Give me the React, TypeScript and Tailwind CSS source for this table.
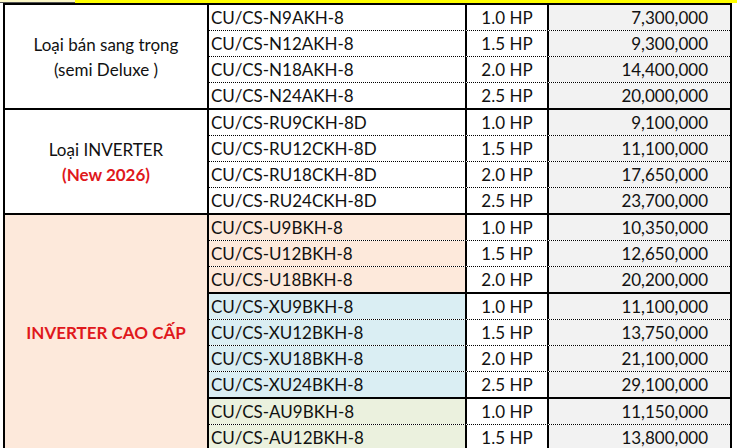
import React from "react";

type Row = { model: string; hp: string; price: string };

const groups: {
  label: React.ReactNode;
  bg: string;
  subs: { bg: string; rows: Row[] }[];
}[] = [
  {
    label: (
      <>
        <div>Loại bán sang trọng</div>
        <div>(semi Deluxe )</div>
      </>
    ),
    bg: "bg-white",
    subs: [
      {
        bg: "bg-white",
        rows: [
          { model: "CU/CS-N9AKH-8", hp: "1.0 HP", price: "7,300,000" },
          { model: "CU/CS-N12AKH-8", hp: "1.5 HP", price: "9,300,000" },
          { model: "CU/CS-N18AKH-8", hp: "2.0 HP", price: "14,400,000" },
          { model: "CU/CS-N24AKH-8", hp: "2.5 HP", price: "20,000,000" },
        ],
      },
    ],
  },
  {
    label: (
      <>
        <div>Loại INVERTER</div>
        <div className="font-bold text-[#e0181c]">(New 2026)</div>
      </>
    ),
    bg: "bg-white",
    subs: [
      {
        bg: "bg-white",
        rows: [
          { model: "CU/CS-RU9CKH-8D", hp: "1.0 HP", price: "9,100,000" },
          { model: "CU/CS-RU12CKH-8D", hp: "1.5 HP", price: "11,100,000" },
          { model: "CU/CS-RU18CKH-8D", hp: "2.0 HP", price: "17,650,000" },
          { model: "CU/CS-RU24CKH-8D", hp: "2.5 HP", price: "23,700,000" },
        ],
      },
    ],
  },
  {
    label: <div className="font-bold text-[#e0181c]">INVERTER CAO CẤP</div>,
    bg: "bg-[#fde9db]",
    subs: [
      {
        bg: "bg-[#fde9db]",
        rows: [
          { model: "CU/CS-U9BKH-8", hp: "1.0 HP", price: "10,350,000" },
          { model: "CU/CS-U12BKH-8", hp: "1.5 HP", price: "12,650,000" },
          { model: "CU/CS-U18BKH-8", hp: "2.0 HP", price: "20,200,000" },
        ],
      },
      {
        bg: "bg-[#daeef3]",
        rows: [
          { model: "CU/CS-XU9BKH-8", hp: "1.0 HP", price: "11,100,000" },
          { model: "CU/CS-XU12BKH-8", hp: "1.5 HP", price: "13,750,000" },
          { model: "CU/CS-XU18BKH-8", hp: "2.0 HP", price: "21,100,000" },
          { model: "CU/CS-XU24BKH-8", hp: "2.5 HP", price: "29,100,000" },
        ],
      },
      {
        bg: "bg-[#ebf1de]",
        rows: [
          { model: "CU/CS-AU9BKH-8", hp: "1.0 HP", price: "11,150,000" },
          { model: "CU/CS-AU12BKH-8", hp: "1.5 HP", price: "13,800,000" },
        ],
      },
    ],
  },
];

export default function App() {
  return (
    <div className="w-[737px] h-[448px] overflow-hidden bg-white text-[17px] text-[#111] font-['Lato','Liberation_Sans',sans-serif]">
      <div className="flex h-[3px]">
        <div className="w-[75px] bg-[#fbf7c8] border-b border-[#555]" />
        <div className="flex-1 bg-[#ffff00]" />
      </div>
      <div className="ml-[3px] w-[729px] border-x-2 border-b-2 border-black">
        {groups.map((g, gi) => (
          <div key={gi} className="flex">
            <div
              className={`w-[204px] shrink-0 border-t-2 border-r-2 border-black flex flex-col items-center justify-center leading-[25px] ${g.bg}`}
            >
              {g.label}
            </div>
            <div className="flex-1 flex flex-col">
              {g.subs.map((s) =>
                s.rows.map((r, ri) => (
                  <div
                    key={r.model}
                    className={`flex ${ri === 0 ? "h-[27px] border-t-2 border-solid" : "h-[26px] border-t border-dotted"} border-black`}
                  >
                    <div
                      className={`w-[258px] flex items-center pl-[2px] border-r-2 border-solid border-black ${s.bg}`}
                    >
                      {r.model}
                    </div>
                    <div className="w-[82px] flex items-center justify-center border-r-2 border-solid border-black bg-white">
                      {r.hp}
                    </div>
                    <div className="flex-1 flex items-center justify-end pr-[22px] bg-[#f2f2f2]">
                      {r.price}
                    </div>
                  </div>
                ))
              )}
            </div>
          </div>
        ))}
      </div>
    </div>
  );
}
